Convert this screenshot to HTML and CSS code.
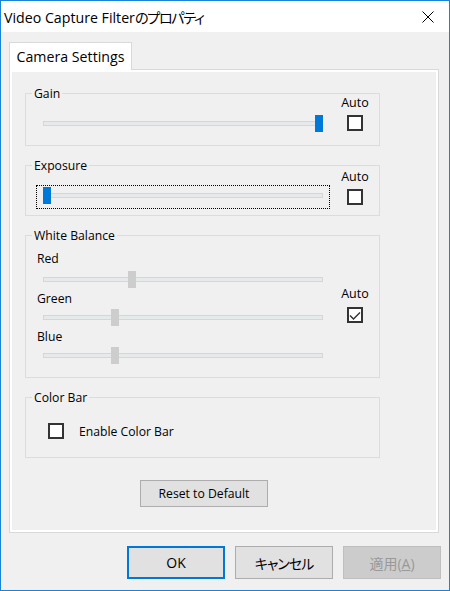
FILE: index.html
```html
<!DOCTYPE html>
<html lang="ja">
<head>
<meta charset="utf-8">
<title>Video Capture Filterのプロパティ</title>
<link rel="stylesheet" href="styles.css">
</head>
<body>
<div class="window">
  <div class="titlebar">
    <span class="title">Video Capture Filter<span class="jp">のプロパティ</span></span>
    <svg class="close" viewBox="0 0 12 12" width="12" height="12"><path d="M0.5 0.5 L11.5 11.5 M11.5 0.5 L0.5 11.5" stroke="#000" stroke-width="1" fill="none"/></svg>
  </div>
  <div class="content">
    <div class="tabs"><div class="tab">Camera Settings</div></div>
    <div class="page">
      <div class="group gain">
        <span class="legend">Gain</span>
        <div class="slider-col">
          <div class="slider"><div class="track"><div class="thumb" style="--v:1"></div></div></div>
        </div>
        <div class="auto-col">
          <span class="auto-label">Auto</span>
          <span class="cb"></span>
        </div>
      </div>
      <div class="group exposure">
        <span class="legend">Exposure</span>
        <div class="slider-col">
          <div class="slider focused"><div class="track"><div class="thumb" style="--v:0"></div></div></div>
        </div>
        <div class="auto-col">
          <span class="auto-label">Auto</span>
          <span class="cb"></span>
        </div>
      </div>
      <div class="group wb">
        <span class="legend">White Balance</span>
        <div class="slider-col">
          <div class="wb-label">Red</div>
          <div class="slider"><div class="track"><div class="thumb off" style="--v:0.3125"></div></div></div>
          <div class="wb-label">Green</div>
          <div class="slider"><div class="track"><div class="thumb off" style="--v:0.249"></div></div></div>
          <div class="wb-label">Blue</div>
          <div class="slider"><div class="track"><div class="thumb off" style="--v:0.249"></div></div></div>
        </div>
        <div class="auto-col">
          <span class="auto-label">Auto</span>
          <span class="cb"><svg viewBox="0 0 12 12" width="12" height="12"><polyline points="1,6.5 4.5,10 11,3.5" fill="none" stroke="#333" stroke-width="1.4"/></svg></span>
        </div>
      </div>
      <div class="group colorbar">
        <span class="legend">Color Bar</span>
        <div class="cb-row">
          <span class="cb"></span>
          <span class="cb-text">Enable Color Bar</span>
        </div>
      </div>
      <button class="btn reset">Reset to Default</button>
    </div>
    <div class="buttons">
      <button class="btn dlg ok">OK</button>
      <button class="btn dlg"><span class="jp-btn">キャンセル</span></button>
      <button class="btn dlg disabled">適用(<u>A</u>)</button>
    </div>
  </div>
</div>
</body>
</html>
```
FILE: styles.css
```css
* { box-sizing: border-box; }
html, body { margin: 0; padding: 0; }
body {
  width: 450px;
  height: 591px;
  overflow: hidden;
  background: #f0f0f0;
  font-family: "Open Sans", "Noto Sans CJK JP", sans-serif;
  color: #000;
}
.window {
  width: 450px;
  height: 591px;
  border: 1px solid #1883d7;
  background: #f0f0f0;
  display: flex;
  flex-direction: column;
}
.titlebar {
  flex: none;
  height: 31px;
  background: #fff;
  display: flex;
  align-items: center;
  justify-content: space-between;
  padding-left: 3px;
}
.title {
  font-size: 14.2px;
  white-space: nowrap;
}
.jp {
  font-family: "Noto Sans CJK JP", sans-serif;
  font-feature-settings: "palt" 1;
  letter-spacing: -1.4px;
}
.jp-btn {
  font-family: "Noto Sans CJK JP", sans-serif;
  font-feature-settings: "palt" 1;
  letter-spacing: -1px;
}
.close { margin-right: 15px; display: block; }
.content {
  flex: 1;
  padding: 10px 8px 0 8px;
  display: flex;
  flex-direction: column;
}
.tabs { display: flex; position: relative; z-index: 1; }
.tab {
  width: 123px;
  height: 28px;
  margin-bottom: -1px;
  border: 1px solid #d9d9d9;
  border-bottom: none;
  background: #fff;
  font-size: 14.2px;
  display: flex;
  align-items: center;
  justify-content: center;
}
.page {
  width: 430px;
  height: 464px;
  border: 1px solid #d9d9d9;
  box-shadow: inset 0 0 0 2px #fff;
  padding: 23px 0 0 15px;
}
.group {
  position: relative;
  width: 355px;
  border: 1px solid #dcdcdc;
  display: flex;
  align-items: flex-start;
}
.group + .group { margin-top: 19px; }
.gain { height: 53px; }
.exposure { height: 51px; }
.wb { height: 143px; }
.colorbar { height: 61px; }
.legend {
  position: absolute;
  top: -8px;
  left: 6px;
  padding: 0 2px;
  background: #f0f0f0;
  font-size: 12.2px;
  line-height: 15px;
  white-space: nowrap;
}
.slider-col { margin-left: 10px; width: 294px; }
.gain .slider, .exposure .slider { margin-top: 19px; }
.slider {
  position: relative;
  width: 294px;
  height: 24px;
  border: 1px solid transparent;
}
.slider.focused { border: 1px dotted #000; }
.track {
  position: relative;
  margin: 7px 6px 0 6px;
  height: 5px;
  border: 1px solid #d6d6d6;
  background: #e7eaea;
}
.thumb {
  position: absolute;
  top: -7px;
  left: calc(var(--v) * (100% - 6px) - 1px);
  width: 8px;
  height: 17px;
  background: #0078d7;
}
.thumb.off { background: #cdcdcd; }
.wb-label {
  font-size: 12.2px;
  line-height: 15px;
  padding-left: 1px;
  margin-top: -2px;
}
.wb-label:first-child { margin-top: 15px; }
.wb .slider { margin-top: 1px; }
.wb .wb-label:first-child + .slider { margin-top: 3px; }
.auto-col {
  width: 40px;
  margin-left: 5px;
  display: flex;
  flex-direction: column;
  align-items: center;
}
.auto-label { font-size: 12.5px; line-height: 15px; }
.gain .auto-label { margin-top: 1px; }
.gain .cb { margin-top: 5px; }
.exposure .auto-label { margin-top: 3px; }
.exposure .cb { margin-top: 5px; }
.wb .auto-label { margin-top: 50px; }
.wb .cb { margin-top: 6px; }
.cb {
  display: block;
  width: 16px;
  height: 16px;
  border: 2px solid #333;
  background: #fff;
}
.cb svg { display: block; }
.cb-row {
  display: flex;
  align-items: center;
  margin: 25px 0 0 22px;
}
.cb-text { font-size: 12.2px; line-height: 15px; margin-left: 15px; }
.btn {
  font-family: "Open Sans", "Noto Sans CJK JP", sans-serif;
  color: #000;
  background: #e1e1e1;
  border: 1px solid #adadad;
  padding: 0;
  margin: 0;
}
.reset {
  display: block;
  width: 128px;
  height: 27px;
  margin: 22px 0 0 115px;
  font-size: 12.2px;
}
.buttons {
  display: flex;
  justify-content: flex-end;
  gap: 10px;
  margin-top: 13px;
}
.dlg {
  width: 98px;
  height: 33px;
  font-size: 14px;
}
.dlg.ok { border: 2px solid #0078d7; }
.dlg.disabled { background: #cccccc; border-color: #bfbfbf; color: #999; }
```
